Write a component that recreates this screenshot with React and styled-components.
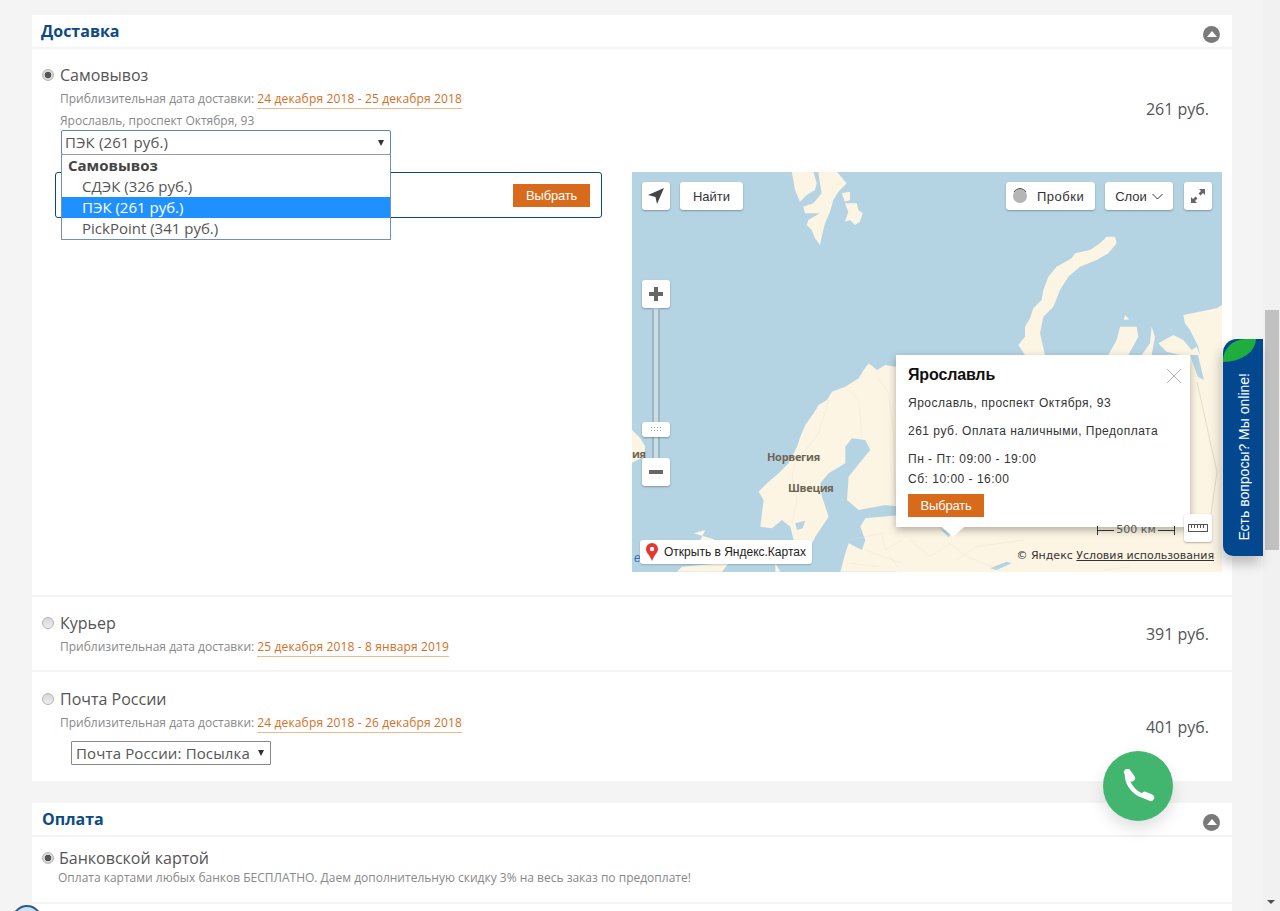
import React from "react";
import styled, { createGlobalStyle } from "styled-components";

const Global = createGlobalStyle`
  html, body { margin: 0; padding: 0; height: 911px; overflow: hidden; background: #f4f4f4; }
  * { box-sizing: border-box; }
  body { font-family: "Open Sans", sans-serif; color: #555; }
`;
const Shell = styled.div`display: flex; height: 911px; position: relative; overflow: hidden;`;
const Page = styled.main`flex: 1; padding: 15px 31px 0 32px; min-width: 0;`;
const Panel = styled.section`background: #fff; margin-bottom: ${p => p.$gap || 0}px; min-height: ${p => p.$min || 0}px;`;
const PanelHead = styled.header`
  height: 34px; display: flex; justify-content: space-between; align-items: flex-start;
  padding: 5px 12px 0 ${p => p.$left}px; border-bottom: 2px solid #f4f4f4;
`;
const Title = styled.h2`margin: 0; font-size: 16px; line-height: 22px; font-weight: 700; color: #0d4a85;`;
const Collapse = styled.span`
  width: 17px; height: 17px; border-radius: 50%; background: #7a7a7a; margin-top: 6px;
  display: flex; align-items: center; justify-content: center;
  &::before { content: ""; border: 5px solid transparent; border-top: 0; border-bottom: 6px solid #fff; margin-top: -1px; }
`;
const Option = styled.div`
  padding: ${p => p.$top}px 23px ${p => p.$bottom}px 10px;
  border-bottom: ${p => p.$last ? "0" : "2px solid #f4f4f4"};
`;
const OptionRow = styled.div`display: flex; justify-content: space-between; align-items: center;`;
const OptionMain = styled.div`min-width: 0;`;
const LabelLine = styled.div`display: flex; align-items: center; gap: ${p => p.$gap || 6}px; font-size: 16px; line-height: 22px; color: #555;`;
const Radio = styled.span`
  width: 12px; height: 12px; border-radius: 50%; border: 1px solid #b5b5b5; flex: none;
  background: ${p => p.$on ? "radial-gradient(circle, #555 0 3px, #d8d8d8 3.6px)" : "linear-gradient(#d5d5d5, #eee)"};
`;
const Note = styled.div`
  margin-left: ${p => p.$indent || 18}px; font-size: 12px; line-height: 17px; color: #888; margin-top: ${p => p.$top || 0}px; white-space: nowrap;
`;
const DateText = styled.span`color: #d2701f; border-bottom: 1px solid #efb98c; padding-bottom: 1px; letter-spacing: .14px;`;
const Price = styled.div`font-size: 16px; line-height: 22px; color: #555; margin-top: ${p => p.$top || 0}px;`;
const SelectWrap = styled.div`position: relative; margin: 1px 0 0 19px; width: 330px; z-index: 4;`;
const SelectBox = styled.div`
  height: 25px; border: 1px solid #5b86b8; border-radius: 2px; background: #fff; font-size: 15px; line-height: 23px; letter-spacing: .12px;
  padding: 0 5px 0 3px; display: flex; justify-content: space-between; align-items: center; color: #555;
`;
const Caret = styled.span`border: 3px solid transparent; border-top: 6px solid #333; border-bottom: 0; margin-right: 1px;`;
const Drop = styled.div`
  position: absolute; left: 0; right: 0; top: 24px; background: #fff; border: 1px solid #6f93b8; border-top-color: #999;
  font-size: 15px; line-height: 21px; color: #555;
`;
const DropGroup = styled.div`font-weight: 700; padding-left: 6px; color: #444;`;
const DropItem = styled.div`padding-left: 20px; background: ${p => p.$on ? "#1e90ff" : "#fff"}; color: ${p => p.$on ? "#fff" : "#555"};`;
const PickupArea = styled.div`display: flex; margin: 17px -13px 0 13px; gap: 30px; align-items: flex-start;`;
const ResultBox = styled.div`
  flex: none; width: 547px; height: 46px; border: 1px solid #0d4a7a; border-radius: 3px; display: flex; justify-content: flex-end; align-items: center; padding-right: 11px;
`;
const Action = styled.button`
  border: 0; background: #d76b1b; color: #fff; height: 23px; padding: 0; width: ${p => p.$w}px; display: block;
  font: 13px/23px "Liberation Sans", Arial, sans-serif; letter-spacing: -.2px;
`;
const Map = styled.div`
  flex: none; position: relative; width: 590px; height: 400px; overflow: hidden; background: #b5d4e3; font-family: "Liberation Sans", Arial, sans-serif; color: #333;
`;
const MapArt = styled.svg`position: absolute; inset: 0; display: block;`;
const TopBar = styled.div`position: absolute; left: 10px; right: 10px; top: 10px; display: flex; justify-content: space-between;`;
const BarGroup = styled.div`display: flex; gap: 10px;`;
const MapBtn = styled.div`
  flex: none; width: ${p => p.$w || 28}px; height: 28px; margin-right: ${p => p.$mr || 0}px;
  background: #fff; border-radius: 3px; box-shadow: 0 1px 2px rgba(0,0,0,.3); display: flex; align-items: center; justify-content: center; gap: ${p => p.$g || 0}px;
  font-size: 13px; color: #333;
`;
const TrafficBtn = styled(MapBtn)`justify-content: flex-start; padding-left: 6px; letter-spacing: .5px;`;
const ZoomControl = styled.div`position: absolute; left: 10px; top: 108px; width: 28px; display: flex; flex-direction: column; align-items: center;`;
const Slider = styled.div`
  position: relative; width: 8px; height: 150px; border-left: 2px solid #a5b5bf; border-right: 2px solid #a5b5bf; background: rgba(255,255,255,.25);
`;
const SliderThumb = styled.div`position: absolute; left: -12px; top: 114px; width: 28px; height: 15px; background: #fff; border-radius: 3px; box-shadow: 0 1px 2px rgba(0,0,0,.3); display: flex; align-items: center; justify-content: center;`;
const RulerBtn = styled.div`position: absolute; right: 10px; top: 342px;`;
const Place = styled.span`
  position: absolute; left: ${p => p.$x}px; top: ${p => p.$y}px; font: 700 11px/13px "Open Sans", sans-serif; color: #6e6455; white-space: nowrap; letter-spacing: -.3px;
`;
const Balloon = styled.div`
  position: absolute; left: 264px; top: 183px; width: 294px; height: 172px; background: #fff; box-shadow: 0 3px 8px rgba(0,0,0,.3); padding: 9px 12px 0;
  font-size: 12px; color: #333; letter-spacing: .5px;
  &::after { content: ""; position: absolute; left: 46px; bottom: -10px; border: 11px solid transparent; border-bottom: 0; border-top: 10px solid #fff; }
`;
const BalloonTitle = styled.div`font-weight: 700; font-size: 16px; line-height: 22px; color: #111; letter-spacing: -.15px; margin-bottom: 7px;`;
const BalloonLine = styled.div`line-height: 20px; margin-bottom: ${p => p.$gap || 0}px;`;
const BalloonAction = styled.div`margin-top: 5px;`;
const Close = styled.svg`position: absolute; right: 8px; top: 13px;`;
const Scale = styled.div`
  position: absolute; left: 465px; top: 352px; width: 78px; display: flex; align-items: center; justify-content: space-between; font: 11px/12px "DejaVu Sans", sans-serif; color: #555;
  &::before, &::after { content: ""; width: 16px; height: 9px; border-left: 1px solid #333; background: linear-gradient(#333,#333) 0 4px/100% 1px no-repeat; }
  &::after { border-left: 0; border-right: 1px solid #333; }
`;
const Legal = styled.div`
  position: absolute; right: 8px; top: 377px; font: 11px/14px "DejaVu Sans", sans-serif; color: #333; white-space: nowrap;
`;
const OpenMaps = styled.div`
  position: absolute; left: 8px; top: 368px; width: 172px; height: 24px; background: #fff; border-radius: 3px; box-shadow: 0 1px 2px rgba(0,0,0,.2);
  display: flex; align-items: center; gap: 6px; padding-left: 6px; font-size: 12px; color: #222; white-space: nowrap;
`;
const CutLink = styled.span`position: absolute; left: 2px; top: 379px; font: italic 12px/14px "Liberation Sans", sans-serif; color: #3a6fb0;`;
const SubSelect = styled.div`
  margin: 10px 0 0 29px; width: 200px; height: 24px; border: 1px solid #888; border-radius: 1px; display: flex; align-items: center; justify-content: space-between;
  padding: 0 5px 0 4px; font-size: 15px; letter-spacing: .14px; color: #555; background: #fff; white-space: nowrap;
`;
const Track = styled.aside`width: 17px; background: #f1f1f1; position: relative; flex: none;`;
const Thumb = styled.div`position: absolute; left: 2px; top: 310px; width: 14px; height: 240px; background: #c1c1c1;`;
const TrackArrow = styled.div`position: absolute; left: 4px; bottom: 7px; border: 4px solid transparent; border-top: 4px solid #505050; border-bottom: 0;`;
const ChatTab = styled.div`
  position: absolute; left: 1223px; top: 339px; width: 40px; height: 217px; background: #03488f; border-radius: 14px 0 0 10px;
  box-shadow: -3px 8px 12px rgba(0,0,0,.22); overflow: hidden; display: flex; align-items: center; justify-content: center;
`;
const Leaf = styled.span`position: absolute; left: 0; top: 0; width: 33px; height: 23px; background: #1fae3e; border-radius: 22px 0 100% 0 / 22px 0 100% 0;`;
const ChatText = styled.span`
  writing-mode: vertical-rl; transform: rotate(180deg); font: 14px/18px "Liberation Sans", Arial, sans-serif; color: #fff; white-space: nowrap; margin-top: 18px; margin-left: 1px;
`;
const CallBtn = styled.div`
  position: absolute; left: 1103px; top: 751px; width: 70px; height: 70px; border-radius: 50%; background: #42b56f;
  box-shadow: 0 8px 16px rgba(0,0,0,.12); display: flex; align-items: center; justify-content: center;
`;
const Badge = styled.span`position: absolute; left: 12px; top: 905px; width: 30px; height: 30px; border-radius: 50%; border: 2px solid #2c5a8c; background: #cfe0ee;`;

const at = (x, y) => `translate(${x - 632},${y - 172}) scale(0.3333)`;
const MapDrawing = () => (
  <MapArt width="590" height="400" viewBox="0 0 590 400">
    <g fill="#fdf5e4">
      <g transform={at(780, 170)}>
        <path d="M35 5 L100 5 L110 40 L105 60 L80 75 L60 95 L45 60 L40 30Z" />
        <path d="M115 5 L170 5 L200 40 L175 65 L160 90 L150 125 L135 160 L125 200 L120 225 L105 205 L95 180 L80 165 L85 150 L120 130 L75 130 L70 110 L100 100 L125 70 L120 40Z" />
        <path d="M185 70 L210 65 L210 90 L195 95Z" />
        <path d="M195 100 L230 100 L235 120 L248 130 L240 155 L225 165 L210 150 L195 155 L205 125Z" />
      </g>
      <g transform={at(1000, 230)}>
        <path d="M345 20 L350 40 L325 70 L290 90 L240 110 L205 140 L180 180 L160 230 L130 260 L120 310 L135 375 L75 375 L55 345 L75 320 L75 290 L90 265 L100 235 L125 210 L130 180 L145 140 L170 110 L215 85 L225 70 L270 60 L300 40 L320 20Z" />
        <path d="M360 290 L410 290 L415 320 L385 375 L325 375 L350 330Z" />
        <path d="M375 255 L388 268 L372 270Z" />
        <path d="M455 290 L465 320 L455 375 L425 375 L450 340Z" />
        <path d="M475 340 L520 315 L550 330 L575 360 L590 350 L600 375 L540 375 L500 365Z" />
        <path d="M550 255 L650 235 L666 225 L666 375 L600 375 L595 350 L570 300 L555 280Z" />
      </g>
      <g transform={at(632, 350)}>
        <path d="M810 30 L790 50 L760 45 L735 60 L710 40 L695 60 L680 85 L640 110 L600 125 L585 150 L560 165 L545 190 L520 225 L505 260 L495 290 L470 340 L440 370 L410 395 L380 425 L395 450 L390 490 L385 530 L420 535 L450 510 L475 530 L485 570 L510 600 L530 600 L550 560 L570 530 L590 500 L570 440 L565 400 L590 370 L640 340 L640 290 L660 265 L700 270 L715 300 L690 330 L650 380 L645 450 L680 480 L760 465 L810 470 Z" />
        <path d="M810 495 L700 505 L685 530 L700 570 L690 600 L650 580 L640 610 L625 665 L810 665Z" />
        <path d="M0 240 L25 265 L40 290 L35 320 L0 338Z" />
        <path d="M185 550 L220 540 L205 570 L240 570 L270 640 L150 650 L135 665 L270 665 L290 640 L245 568Z" />
        <path d="M430 640 L445 665 L430 665Z" />
      </g>
      <rect x="264" y="183" width="326" height="217" />
    </g>
    <g fill="#b5d4e3">
      <g transform={at(632, 350)}>
        <path d="M490 520 L520 512 L512 535 L495 540Z" />
      </g>
      <g transform={at(890, 500)}>
        <path d="M150 85 L175 112 L185 100Z" />
        <path d="M300 205 L350 185 L365 190 L320 210Z" />
      </g>
      <path d="M558 183 L566 183 L572 208 L566 205Z" />
    </g>
    <g fill="none" stroke="#e6dbc6" strokeWidth="1">
      <g transform={at(632, 350)}>
        <path d="M590 150 L560 250 L520 300 L490 340 L480 380 L495 450 L480 520" />
        <path d="M640 110 L680 150 L690 260" />
        <path d="M735 80 L770 130 L785 250 L790 460" />
        <path d="M650 570 L750 550 L760 600 L810 570" />
        <path d="M700 600 L810 640" />
        <path d="M660 640 L740 650" />
      </g>
      <g transform={at(890, 500)}>
        <path d="M60 120 L120 170 L180 130 L230 170 L330 210" />
        <path d="M200 180 L260 140 L400 120" />
        <path d="M720 200 L640 210" />
        <path d="M0 170 L30 210" />
      </g>
      <path d="M565 210 L585 300 L575 370" />
    </g>
  </MapArt>
);

const DeliveryPanel = () => (
  <Panel $gap={22}>
    <PanelHead $left={9}>
      <Title>Доставка</Title>
      <Collapse />
    </PanelHead>
    <Option $top={15} $bottom={23}>
      <OptionRow>
        <OptionMain>
          <LabelLine><Radio $on />Самовывоз</LabelLine>
          <Note $top={4}>Приблизительная дата доставки: <DateText>24 декабря 2018 - 25 декабря 2018</DateText></Note>
          <Note $top={5}>Ярославль, проспект Октября, 93</Note>
          <SelectWrap>
            <SelectBox>ПЭК (261 руб.)<Caret /></SelectBox>
            <Drop>
              <DropGroup>Самовывоз</DropGroup>
              <DropItem>СДЭК (326 руб.)</DropItem>
              <DropItem $on>ПЭК (261 руб.)</DropItem>
              <DropItem>PickPoint (341 руб.)</DropItem>
            </Drop>
          </SelectWrap>
        </OptionMain>
        <Price $top={-2}>261 руб.</Price>
      </OptionRow>
      <PickupArea>
        <ResultBox><Action $w={77}>Выбрать</Action></ResultBox>
        <Map>
          <MapDrawing />
          <TopBar>
            <BarGroup>
              <MapBtn>
                <svg width="18" height="18" viewBox="0 0 18 18"><path d="M17 1 L1 8 L8.5 10 L10 17Z" fill="#444" /></svg>
              </MapBtn>
              <MapBtn $w={63}>Найти</MapBtn>
            </BarGroup>
            <BarGroup>
              <TrafficBtn $w={89} $g={9}>
                <svg width="16" height="16" viewBox="0 0 16 16"><circle cx="8" cy="8" r="7" fill="#b5b5b5" /><path d="M2 4 A7 7 0 0 1 14 4" fill="none" stroke="#444" strokeWidth="1" /></svg>
                Пробки
              </TrafficBtn>
              <MapBtn $w={68} $g={5} $mr={1}>
                Слои
                <svg width="11" height="7" viewBox="0 0 11 7"><path d="M.5 1 L5.5 6 L10.5 1" fill="none" stroke="#333" /></svg>
              </MapBtn>
              <MapBtn>
                <svg width="16" height="16" viewBox="0 0 16 16" fill="#666"><path d="M9 1 H15 V7 L13 5 L10.5 7.5 L8.5 5.5 L11 3Z" /><path d="M7 15 H1 V9 L3 11 L5.5 8.5 L7.5 10.5 L5 13Z" /></svg>
              </MapBtn>
            </BarGroup>
          </TopBar>
          <ZoomControl>
            <MapBtn>
              <svg width="14" height="14" viewBox="0 0 14 14"><path d="M5 0 H9 V5 H14 V9 H9 V14 H5 V9 H0 V5 H5Z" fill="#666" /></svg>
            </MapBtn>
            <Slider>
              <SliderThumb>
                <svg width="12" height="5" viewBox="0 0 12 5" fill="#999"><path d="M1 0h1v1H1zM4 0h1v1H4zM7 0h1v1H7zM10 0h1v1h-1zM1 3h1v1H1zM4 3h1v1H4zM7 3h1v1H7zM10 3h1v1h-1z" /></svg>
              </SliderThumb>
            </Slider>
            <MapBtn>
              <svg width="14" height="4" viewBox="0 0 14 4"><rect width="14" height="4" fill="#666" /></svg>
            </MapBtn>
          </ZoomControl>
          <Place $x={135} $y={278}>Норвегия</Place>
          <Place $x={156} $y={309}>Швеция</Place>
          <Place $x={0} $y={275}>ия</Place>
          <Balloon>
            <BalloonTitle>Ярославль</BalloonTitle>
            <Close width="16" height="16" viewBox="0 0 16 16"><path d="M1 1 L15 15 M15 1 L1 15" stroke="#b5b5b5" strokeWidth="1" fill="none" /></Close>
            <BalloonLine $gap={8}>Ярославль, проспект Октября, 93</BalloonLine>
            <BalloonLine $gap={8}>261 руб. Оплата наличными, Предоплата</BalloonLine>
            <BalloonLine>Пн - Пт: 09:00 - 19:00</BalloonLine>
            <BalloonLine>Сб: 10:00 - 16:00</BalloonLine>
            <BalloonAction><Action $w={76}>Выбрать</Action></BalloonAction>
          </Balloon>
          <Scale>500 км</Scale>
          <RulerBtn>
            <MapBtn>
              <svg width="20" height="8" viewBox="0 0 20 8"><rect x=".5" y=".5" width="19" height="7" fill="none" stroke="#555" /><path d="M3.5 1v3M6.5 1v3M9.5 1v3M12.5 1v3M15.5 1v3" stroke="#555" /></svg>
            </MapBtn>
          </RulerBtn>
          <CutLink>е</CutLink>
          <OpenMaps>
            <svg width="12" height="18" viewBox="0 0 12 18"><path d="M6 0 A6 6 0 0 1 12 6 C12 10 8 12 6 18 C4 12 0 10 0 6 A6 6 0 0 1 6 0Z" fill="#e8352e" /><circle cx="6" cy="6" r="2.2" fill="#fff" /></svg>
            Открыть в Яндекс.Картах
          </OpenMaps>
          <Legal>© Яндекс <u>Условия использования</u></Legal>
        </Map>
      </PickupArea>
    </Option>
    <Option $top={15} $bottom={15}>
      <OptionRow>
        <OptionMain>
          <LabelLine><Radio />Курьер</LabelLine>
          <Note $top={4}>Приблизительная дата доставки: <DateText>25 декабря 2018 - 8 января 2019</DateText></Note>
        </OptionMain>
        <Price>391 руб.</Price>
      </OptionRow>
    </Option>
    <Option $top={16} $bottom={16} $last>
      <OptionRow>
        <OptionMain>
          <LabelLine><Radio />Почта России</LabelLine>
          <Note $top={4}>Приблизительная дата доставки: <DateText>24 декабря 2018 - 26 декабря 2018</DateText></Note>
          <SubSelect>Почта России: Посылка<Caret /></SubSelect>
        </OptionMain>
        <Price>401 руб.</Price>
      </OptionRow>
    </Option>
  </Panel>
);

const PaymentPanel = () => (
  <Panel>
    <PanelHead $left={10}>
      <Title>Оплата</Title>
      <Collapse />
    </PanelHead>
    <Option $top={10} $bottom={16}>
      <LabelLine $gap={5}><Radio $on />Банковской картой</LabelLine>
      <Note $indent={16}>Оплата картами любых банков БЕСПЛАТНО. Даем дополнительную скидку 3% на весь заказ по предоплате!</Note>
    </Option>
  </Panel>
);

export default function App() {
  return (
    <Shell>
      <Global />
      <Page>
        <DeliveryPanel />
        <PaymentPanel />
        <Panel $min={30} />
      </Page>
      <Track><Thumb /><TrackArrow /></Track>
      <ChatTab><Leaf /><ChatText>Есть вопросы? Мы online!</ChatText></ChatTab>
      <CallBtn>
        <svg width="34" height="34" viewBox="0 0 32 32">
          <path d="M5.5 6 C6 16 15 26 26 26" fill="none" stroke="#fff" strokeWidth="4" strokeLinecap="round" />
          <path d="M6 3 L10 8.5" stroke="#fff" strokeWidth="6.5" strokeLinecap="round" />
          <path d="M22.5 24.5 L28 27" stroke="#fff" strokeWidth="6.5" strokeLinecap="round" />
        </svg>
      </CallBtn>
      <Badge />
    </Shell>
  );
}
